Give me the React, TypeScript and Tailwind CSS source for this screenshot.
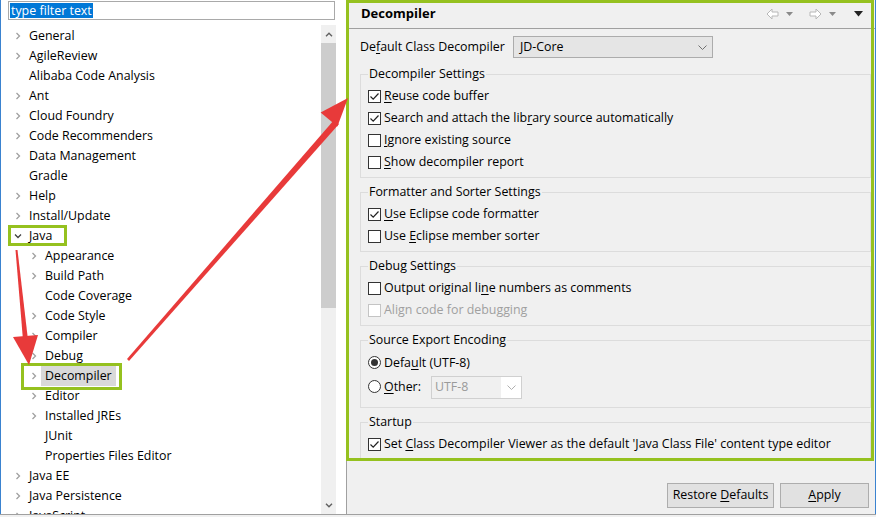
import React from "react";

type TreeNode = { label: string; depth: number; arrow?: "right" | "down"; selected?: boolean };

const TREE: TreeNode[] = [
  { label: "General", depth: 0, arrow: "right" },
  { label: "AgileReview", depth: 0, arrow: "right" },
  { label: "Alibaba Code Analysis", depth: 0 },
  { label: "Ant", depth: 0, arrow: "right" },
  { label: "Cloud Foundry", depth: 0, arrow: "right" },
  { label: "Code Recommenders", depth: 0, arrow: "right" },
  { label: "Data Management", depth: 0, arrow: "right" },
  { label: "Gradle", depth: 0 },
  { label: "Help", depth: 0, arrow: "right" },
  { label: "Install/Update", depth: 0, arrow: "right" },
  { label: "Java", depth: 0, arrow: "down" },
  { label: "Appearance", depth: 1, arrow: "right" },
  { label: "Build Path", depth: 1, arrow: "right" },
  { label: "Code Coverage", depth: 1 },
  { label: "Code Style", depth: 1, arrow: "right" },
  { label: "Compiler", depth: 1, arrow: "right" },
  { label: "Debug", depth: 1, arrow: "right" },
  { label: "Decompiler", depth: 1, arrow: "right", selected: true },
  { label: "Editor", depth: 1, arrow: "right" },
  { label: "Installed JREs", depth: 1, arrow: "right" },
  { label: "JUnit", depth: 1 },
  { label: "Properties Files Editor", depth: 1 },
  { label: "Java EE", depth: 0, arrow: "right" },
  { label: "Java Persistence", depth: 0, arrow: "right" },
  { label: "JavaScript", depth: 0, arrow: "right" },
];

function Chevron({ down }: { down?: boolean }) {
  if (down) {
    return (
      <svg width="8" height="6" viewBox="0 0 8 6">
        <path d="M1 1.5 L4 4.5 L7 1.5" fill="none" stroke="#404040" strokeWidth="1.3" />
      </svg>
    );
  }
  return (
    <svg width="6" height="8" viewBox="0 0 6 8">
      <path d="M1.5 1 L4.5 4 L1.5 7" fill="none" stroke="#a0a0a0" strokeWidth="1.3" />
    </svg>
  );
}

// label with one underlined mnemonic letter
function Mn({ text, at }: { text: string; at: number }) {
  return (
    <span>
      {text.slice(0, at)}
      <span className="underline underline-offset-2">{text[at]}</span>
      {text.slice(at + 1)}
    </span>
  );
}

function Check({ checked, disabled, text, at }: { checked?: boolean; disabled?: boolean; text: string; at: number }) {
  return (
    <div className={`flex h-[22px] items-center gap-[3px] ${disabled ? "text-[#a0a0a0]" : ""}`}>
      <svg width="13" height="13" viewBox="0 0 13 13" className="shrink-0">
        <rect x="0.5" y="0.5" width="12" height="12" fill="#fff" stroke={disabled ? "#c4c4c4" : "#333"} />
        {checked && <path d="M2.5 6.5 L5.2 9.2 L10.5 3.5" fill="none" stroke="#222" strokeWidth="1.2" />}
      </svg>
      <Mn text={text} at={at} />
    </div>
  );
}

function Radio({ checked, children }: { checked?: boolean; children: React.ReactNode }) {
  return (
    <div className="flex items-center gap-[3px]">
      <svg width="13" height="13" viewBox="0 0 13 13" className="shrink-0">
        <circle cx="6.5" cy="6.5" r="6" fill="#fff" stroke="#333" />
        {checked && <circle cx="6.5" cy="6.5" r="3.5" fill="#333" />}
      </svg>
      {children}
    </div>
  );
}

function Group({ title, children, pad = "pt-[3px] pb-[4px]" }: { title: string; children: React.ReactNode; pad?: string }) {
  return (
    <fieldset className={`border border-[#dcdcdc] pl-[7px] ${pad}`}>
      <legend className="px-[1px] leading-[16px]">{title}</legend>
      {children}
    </fieldset>
  );
}

function NavArrow({ dir }: { dir: "left" | "right" }) {
  const d =
    dir === "left"
      ? "M1 6 L6 1 L6 4 L12 4 L12 8 L6 8 L6 11 Z"
      : "M12 6 L7 1 L7 4 L1 4 L1 8 L7 8 L7 11 Z";
  return (
    <svg width="13" height="12" viewBox="0 0 13 12">
      <path d={d} fill="#fff" stroke="#b8b8b8" strokeLinejoin="round" />
    </svg>
  );
}

function Tri({ dark }: { dark?: boolean }) {
  return dark ? (
    <svg width="9" height="6" viewBox="0 0 9 6">
      <path d="M0 0 L9 0 L4.5 5.5 Z" fill="#222" />
    </svg>
  ) : (
    <svg width="7" height="4" viewBox="0 0 7 4">
      <path d="M0 0 L7 0 L3.5 4 Z" fill="#8a8a8a" />
    </svg>
  );
}

export default function App() {
  return (
    <div className="relative h-[517px] w-[876px] overflow-hidden bg-white font-['Open_Sans',sans-serif] text-[12.4px] text-black">
      <div className="flex h-[514px]">
        {/* left: preference tree */}
        <div className="flex w-[346px] flex-col border-l border-[#3a83d0] bg-white">
          <div className="h-[25px] pl-[7px] pt-[1px]">
            <div className="flex h-[19px] w-[327px] items-center border border-[#a9a9a9] pl-[1px]">
              <span className="bg-[#0078d7] px-[1px] leading-[15px] text-white">type filter text</span>
            </div>
          </div>
          <div className="flex min-h-0 flex-1">
            <ul className="flex-1 overflow-hidden pt-[1px]">
              {TREE.map((n) => (
                <li key={n.label} className="flex h-[20px] items-center" style={{ paddingLeft: 10 + n.depth * 16 }}>
                  <span className="flex w-[14px] justify-center">{n.arrow && <Chevron down={n.arrow === "down"} />}</span>
                  <span className={`flex h-full items-center px-[4px] ${n.selected ? "bg-[#d9d9d9]" : ""}`}>{n.label}</span>
                </li>
              ))}
            </ul>
            <div className="flex w-[15px] flex-col bg-[#f0f0f0]">
              <div className="flex h-[18px] items-center justify-center">
                <svg width="8" height="5" viewBox="0 0 8 5">
                  <path d="M1 4.2 L4 1.2 L7 4.2" fill="none" stroke="#606060" strokeWidth="1.4" />
                </svg>
              </div>
              <div className="h-[265px] bg-[#cdcdcd]" />
              <div className="flex-1" />
              <div className="flex h-[18px] items-center justify-center">
                <svg width="8" height="5" viewBox="0 0 8 5">
                  <path d="M1 0.8 L4 3.8 L7 0.8" fill="none" stroke="#606060" strokeWidth="1.4" />
                </svg>
              </div>
            </div>
            <div className="w-[10px]" />
          </div>
        </div>

        {/* right: Decompiler page */}
        <div className="flex flex-1 flex-col border-l border-r border-l-[#a0a0a0] border-r-[#3a83d0] bg-[#f0f0f0]">
          <div className="flex h-[29px] items-center justify-between border-b border-[#a0a0a0] pl-[14px] pr-[12px]">
            <span className="text-[13px] font-bold">Decompiler</span>
            <div className="flex items-center gap-[7px]">
              <NavArrow dir="left" />
              <Tri />
              <span className="w-[2px]" />
              <NavArrow dir="right" />
              <Tri />
              <span className="w-[4px]" />
              <Tri dark />
            </div>
          </div>

          <div className="flex flex-1 flex-col pl-[13px] pr-[4px] pt-[7px]">
            <div className="flex h-[22px] items-center gap-[8px]">
              <Mn text="Default Class Decompiler" at={2} />
              <div className="flex h-[22px] w-[200px] items-center justify-between border border-[#acacac] bg-[#e5e5e5] pl-[6px] pr-[5px]">
                <span>JD-Core</span>
                <svg width="9" height="5" viewBox="0 0 9 5">
                  <path d="M0.5 0.5 L4.5 4.5 L8.5 0.5" fill="none" stroke="#707070" />
                </svg>
              </div>
            </div>

            <div className="mt-[8px] flex flex-col gap-[6px]">
              <Group title="Decompiler Settings">
                <Check checked text="Reuse code buffer" at={0} />
                <Check checked text="Search and attach the library source automatically" at={25} />
                <Check text="Ignore existing source" at={0} />
                <Check text="Show decompiler report" at={0} />
              </Group>
              <Group title="Formatter and Sorter Settings">
                <Check checked text="Use Eclipse code formatter" at={0} />
                <Check text="Use Eclipse member sorter" at={4} />
              </Group>
              <Group title="Debug Settings">
                <Check text="Output original line numbers as comments" at={18} />
                <Check disabled text="Align code for debugging" at={99} />
              </Group>
              <Group title="Source Export Encoding" pad="pt-[4px] pb-[7px]">
                <div className="flex h-[22px] items-center">
                  <Radio checked>
                    <Mn text="Default (UTF-8)" at={4} />
                  </Radio>
                </div>
                <div className="flex h-[26px] items-center">
                  <Radio>
                    <Mn text="Other:" at={0} />
                  </Radio>
                  <div className="ml-[10px] flex h-[23px] w-[91px] items-center justify-between border border-[#d0d0d0] bg-white pr-[5px]">
                    <span className="flex h-full w-[69px] items-center bg-[#f0f0f0] pl-[3px] text-[#9a9a9a]">UTF-8</span>
                    <svg width="9" height="5" viewBox="0 0 9 5">
                      <path d="M0.5 0.5 L4.5 4.5 L8.5 0.5" fill="none" stroke="#b0b0b0" />
                    </svg>
                  </div>
                </div>
              </Group>
              <Group title="Startup">
                <Check checked text="Set Class Decompiler Viewer as the default 'Java Class File' content type editor" at={4} />
              </Group>
            </div>

            <div className="mt-auto flex justify-end gap-[6px] pb-[6px] pr-[2px]">
              <button className="h-[25px] w-[107px] border border-[#adadad] bg-[#e1e1e1]">
                <Mn text="Restore Defaults" at={8} />
              </button>
              <button className="h-[25px] w-[89px] border border-[#adadad] bg-[#e1e1e1]">
                <Mn text="Apply" at={0} />
              </button>
            </div>
          </div>
        </div>
      </div>
      <div className="h-[1px] bg-[#a0a0a0]" />
      <div className="h-[2px] bg-[#f0f0f0]" />

      {/* green highlight boxes */}
      <div className="pointer-events-none absolute left-[346px] top-0 h-[461px] w-[528px] border-[3px] border-[#95c11f]" />
      <div className="pointer-events-none absolute left-[8px] top-[225px] h-[21px] w-[59px] border-[3px] border-[#95c11f]" />
      <div className="pointer-events-none absolute left-[21px] top-[363px] h-[27px] w-[101px] border-[3px] border-[#95c11f]" />

      {/* red arrows */}
      <svg className="pointer-events-none absolute left-0 top-0" width="876" height="517" viewBox="0 0 876 517">
        <polygon points="15.5,250 17.5,250 28,340 23,340" fill="#e83a3a" />
        <polygon points="13,337 38,335 29,365" fill="#e83a3a" />
        <polygon points="127,359 129,361 339,124 334,120" fill="#e83a3a" />
        <polygon points="320.6,112.4 337.4,126.6 348,98" fill="#e83a3a" />
      </svg>
    </div>
  );
}
